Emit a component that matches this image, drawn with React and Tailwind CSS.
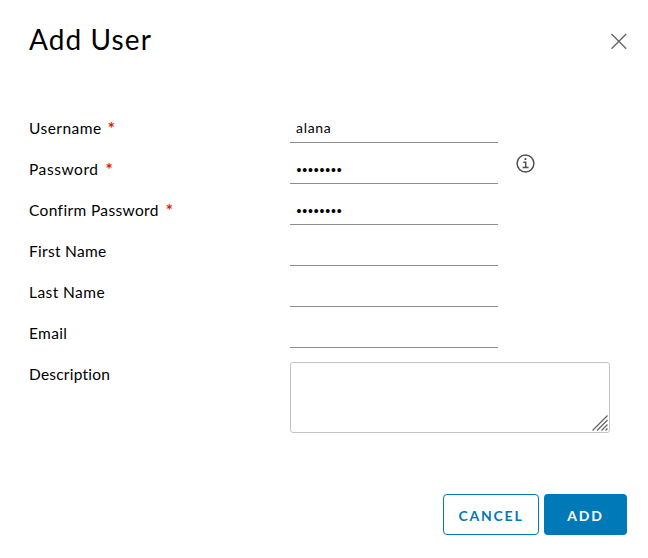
import React from "react";

const fields = [
  { label: "Username", required: true, value: "alana", tracking: "tracking-[0.47px]", gap: "ml-[6px]" },
  { label: "Password", required: true, secret: true, info: true, tracking: "tracking-[0.56px]", gap: "ml-[7px]" },
  { label: "Confirm Password", required: true, secret: true, tracking: "tracking-[0.36px]", gap: "ml-[7px]" },
  { label: "First Name", tracking: "tracking-[0.3px]" },
  { label: "Last Name", tracking: "tracking-[0.43px]" },
  { label: "Email", tracking: "tracking-[0.35px]" },
];

function InfoIcon() {
  return (
    <svg className="ml-[18px] mt-[11px] h-5 w-5 shrink-0" viewBox="0 0 20 20" fill="none" stroke="#505050" strokeWidth="1.5">
      <circle cx="9.5" cy="9.5" r="8.4" />
      <circle cx="9.4" cy="5.1" r="1.1" fill="#505050" stroke="none" />
      <path d="M7.3 8.3h2.4v5M6.6 13.5h6" />
    </svg>
  );
}

function Label({ children, required, tracking, gap }) {
  return (
    <label className={"flex w-[261px] shrink-0 text-[15.5px] leading-5 " + tracking}>
      {children}
      {required && <span className={"pt-px text-[17px] font-bold text-[#e61700] " + gap}>*</span>}
    </label>
  );
}

export default function App() {
  return (
    <div className="flex h-[558px] w-[648px] flex-col bg-white pl-[29px] pr-[21px] pt-[20px] font-['Lato',sans-serif] text-black">
      <header className="flex h-[82px] items-start justify-between">
        <h1 className="text-[28px] leading-[38px] tracking-[1.1px]">Add User</h1>
        <button aria-label="Close" className="mt-[13px] h-4 w-4">
          <svg viewBox="0 0 16 16" fill="none" stroke="#666" strokeWidth="1.4">
            <path d="M.5 1 15.2 15.7M15.2 1 .5 15.7" />
          </svg>
        </button>
      </header>
      <main>
        {fields.map((f) => (
          <div key={f.label} className="flex h-[41px]">
            <div className="pt-[16px]">
              <Label required={f.required} tracking={f.tracking} gap={f.gap}>{f.label}</Label>
            </div>
            <div className="h-[41px] w-[208px] shrink-0 border-b border-[#8c8c8c] pl-[6px] pt-[16px] text-[14px] leading-5">
              {f.value && <span className="tracking-[0.7px]">{f.value}</span>}
              {f.secret && <span className="block pl-[0.5px] pt-[1px] font-['Liberation_Sans',sans-serif] text-[14px] tracking-[0.85px]">••••••••</span>}
            </div>
            {f.info && <InfoIcon />}
          </div>
        ))}
        <div className="flex pt-[14px]">
          <div className="pt-[2px]">
            <Label tracking="tracking-[0.22px]">Description</Label>
          </div>
          <div className="flex h-[71px] w-[320px] items-end justify-end rounded-[3px] border border-[#c4c4c4]">
            <svg className="mb-px mr-px h-4 w-4" viewBox="0 0 16 16" fill="none" stroke="#666" strokeWidth="1.3">
              <path d="M.5 15.5 15.5.5M5 15.5 15.5 5M9.5 15.5l6-6M13.5 15.5l2-2" />
            </svg>
          </div>
        </div>
      </main>
      <footer className="mt-[61px] flex justify-end gap-[5px] text-[14px] font-bold">
        <button className="h-[41px] w-[96px] rounded-[4px] border border-[#0079b8] pt-[2px] tracking-[1.75px] text-[#0079b8]">CANCEL</button>
        <button className="h-[41px] w-[83px] rounded-[4px] bg-[#0079b8] pt-[2px] tracking-[1.75px] text-white">ADD</button>
      </footer>
    </div>
  );
}
